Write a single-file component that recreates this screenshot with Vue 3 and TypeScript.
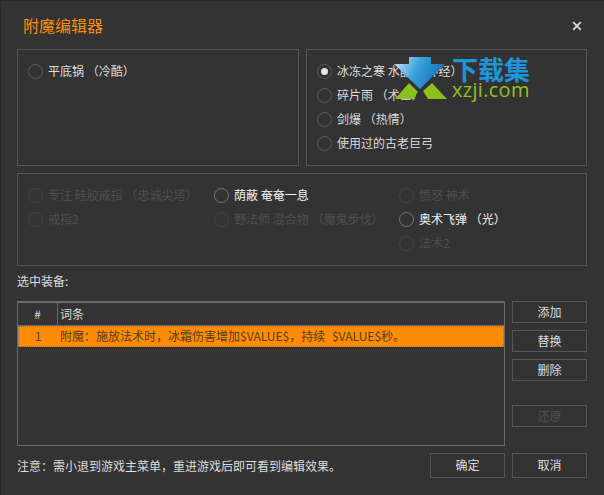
<script setup lang="ts">
interface Opt { label: string; state?: 'on' | 'off' | 'checked' }
const leftOpts: Opt[] = [{ label: '平底锅 （冷酷）' }]
const rightOpts: Opt[] = [
  { label: '冰冻之寒 水晶 （神经）', state: 'checked' },
  { label: '碎片雨 （术士）' },
  { label: '剑爆 （热情）' },
  { label: '使用过的古老巨弓' },
]
const cols: Opt[][] = [
  [{ label: '专注 硅胶戒指 （忠诚尖塔）', state: 'off' }, { label: '戒指2', state: 'off' }],
  [{ label: '荫蔽 奄奄一息', state: 'on' }, { label: '野法师 混合物 （魔鬼步伐）', state: 'off' }],
  [{ label: '愤怒 神术', state: 'off' }, { label: '奥术飞弹 （光）', state: 'on' }, { label: '法术2', state: 'off' }],
]
</script>

<template>
  <div class="win">
    <header class="head">
      <h1 class="title">附魔编辑器</h1>
      <svg class="close" width="10" height="10" viewBox="0 0 10 10">
        <path d="M1.2 1.2 L8.8 8.8 M8.8 1.2 L1.2 8.8" stroke="#dcdcdc" stroke-width="1.7" fill="none" />
      </svg>
    </header>

    <div class="top">
      <section class="box pad">
        <label v-for="o in leftOpts" :key="o.label" class="radio"><i class="dot" />{{ o.label }}</label>
      </section>
      <section class="box pad">
        <label v-for="o in rightOpts" :key="o.label" class="radio" :class="o.state">
          <i class="dot" />{{ o.label }}
        </label>
      </section>
    </div>

    <section class="box pad mid">
      <div v-for="(c, i) in cols" :key="i" class="col">
        <label v-for="o in c" :key="o.label" class="radio" :class="o.state"><i class="dot" />{{ o.label }}</label>
      </div>
    </section>

    <div class="sel">选中装备:</div>

    <div class="work">
      <div class="table">
        <div class="thead">
          <div class="th num">#</div>
          <div class="th">词条</div>
        </div>
        <div class="row">
          <div class="cnum">1</div>
          <div class="ctext">附魔：施放法术时，冰霜伤害增加$VALUE$，持续 $VALUE$秒。</div>
        </div>
      </div>
      <div class="side">
        <button class="btn">添加</button>
        <button class="btn">替换</button>
        <button class="btn">删除</button>
        <button class="btn dim restore">还原</button>
      </div>
    </div>

    <footer class="foot">
      <span class="note">注意：需小退到游戏主菜单，重进游戏后即可看到编辑效果。</span>
      <button class="btn big">确定</button>
      <button class="btn big">取消</button>
    </footer>

    <div class="mark">
      <svg class="arrow" width="56" height="44" viewBox="0 0 56 44">
        <defs>
          <linearGradient id="blue" x1="0" y1="0" x2="1" y2="0.3">
            <stop offset="0" stop-color="#cfeaf7" />
            <stop offset="0.5" stop-color="#3aa3dc" />
            <stop offset="1" stop-color="#1470b8" />
          </linearGradient>
        </defs>
        <polygon points="17,27 26,36 21,43 3,43" fill="#8cc01e" />
        <polygon points="40,27 31,35 36,43 55,43" fill="#8cc01e" />
        <polygon points="17,1 39,1 39,8 53,8 28,33 2,8 17,8" fill="url(#blue)" />
      </svg>
      <div class="brand">
        <div class="cn">下载集</div>
        <div class="en">xzji.com</div>
      </div>
    </div>
  </div>
</template>

<style>
html, body { margin: 0; background: #333; }
</style>

<style scoped>
.win {
  position: relative;
  box-sizing: border-box;
  width: 604px;
  height: 495px;
  padding: 0 17px 0 16px;
  background: #333333;
  border: 1px solid #292929;
  border-width: 1px 0 0 1px;
  color: #dcdcdc;
  font: 12px/16px "Noto Sans CJK SC", "Noto Sans", sans-serif;
  overflow: hidden;
}
.head {
  height: 48px;
  display: flex;
  align-items: center;
  justify-content: space-between;
  padding: 0 5px 0 6px;
}
.title { margin: 0; font-size: 16px; line-height: 20px; font-weight: 400; color: #f78c0c; }
.close { display: block; margin-top: 1px; }
.box { box-sizing: border-box; border: 1px solid #555; }
.pad { padding: 9px 10px; }
.top { display: grid; grid-template-columns: 282px 281px; gap: 7px; }
.top .box { height: 117px; }
.radio { display: flex; align-items: center; height: 24px; gap: 5px; color: #dcdcdc; white-space: pre; }
.dot {
  box-sizing: border-box;
  width: 15px;
  height: 15px;
  border: 1px solid #5c5c5c;
  border-radius: 50%;
  display: flex;
  align-items: center;
  justify-content: center;
  flex: none;
}
.checked .dot::after { content: ""; width: 7px; height: 7px; border-radius: 50%; background: #e6e6e6; }
.off { color: #4f4f4f; }
.off .dot { border-color: #444; }
.on { color: #f4f4f4; }
.on .dot { border-color: #777; }
.mid {
  margin-top: 7px;
  height: 93px;
  display: grid;
  grid-template-columns: 186px 185px 1fr;
}
.sel { margin-top: 7px; height: 28px; line-height: 16px; }
.work { display: flex; gap: 7px; height: 145px; }
.table {
  box-sizing: border-box;
  width: 488px;
  border: 1px solid #6a6a6a;
  border-top-width: 2px;
}
.thead { display: flex; height: 22px; border-bottom: 1px solid #6a6a6a; }
.th { line-height: 22px; padding-left: 2px; }
.num { width: 40px; padding: 0; text-align: center; border-right: 1px solid #6a6a6a; box-sizing: border-box; }
.row {
  display: flex;
  height: 21px;
  line-height: 19px;
  box-sizing: border-box;
  background: #fc8b07;
  color: #55421f;
  outline: 1px dotted #3a7fc0;
  outline-offset: -1px;
}
.cnum { width: 40px; text-align: center; box-sizing: border-box; }
.ctext { padding-left: 2px; white-space: pre; word-spacing: 4px; }
.side { width: 75px; display: flex; flex-direction: column; gap: 7px; }
.btn {
  box-sizing: border-box;
  width: 75px;
  height: 22px;
  padding: 0 0 1px;
  background: transparent;
  border: 1px solid #555;
  color: #dcdcdc;
  font: inherit;
  line-height: 18px;
}
.dim { color: #4f4f4f; }
.restore { margin-top: 17px; }
.foot { display: flex; align-items: center; gap: 7px; margin-top: 7px; height: 25px; }
.note { flex: 1; }
.btn.big { height: 25px; }
.mark {
  position: absolute;
  left: 391px;
  top: 55px;
  display: flex;
  gap: 4px;
  pointer-events: none;
}
.arrow { display: block; }
.brand { margin-top: 1px; }
.cn { color: #1e95d6; font-size: 26px; line-height: 23px; font-weight: 700; }
.en { color: #8fc31f; font: 20px/14px "Open Sans", sans-serif; letter-spacing: 0.3px; margin-top: 3px; }
</style>
